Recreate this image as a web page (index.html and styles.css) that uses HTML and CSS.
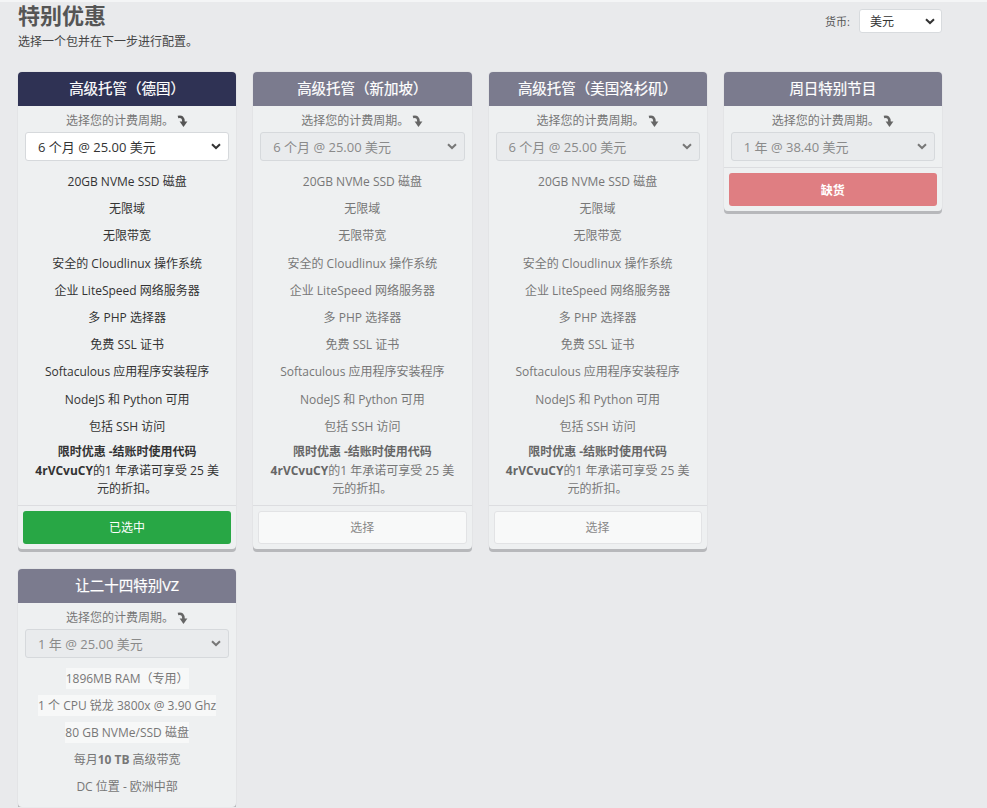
FILE: index.html
```html
<!DOCTYPE html>
<html lang="zh">
<head>
<meta charset="utf-8">
<title>特别优惠</title>
<link rel="stylesheet" href="styles.css">
</head>
<body>
<div class="page">
  <div class="top">
    <div class="intro">
      <h1 class="title">特别优惠</h1>
      <p class="subtitle">选择一个包并在下一步进行配置。</p>
    </div>
    <div class="currency">
      <span class="currency-label">货币:</span>
      <div class="currency-select">美元<svg class="chev" viewBox="0 0 10 7" width="10" height="7"><path d="M1 1.2 L5 5 L9 1.2" fill="none" stroke="#333" stroke-width="2"/></svg></div>
    </div>
  </div>

  <div class="grid">
    <div class="card active">
      <div class="card-head">高级托管（德国）</div>
      <div class="card-body">
        <div class="cycle">选择您的计费周期。<svg class="arrow" viewBox="0 0 11 14" width="11" height="14"><path d="M1 3 Q6.5 1.5 6.5 8" fill="none" stroke="#555" stroke-width="2.6"/><polygon points="2.6,7.5 10.4,7.5 6.5,13" fill="#555"/></svg></div>
        <div class="select">6 个月 @ 25.00 美元<svg class="chev" viewBox="0 0 10 7" width="10" height="7"><path d="M1 1.2 L5 5 L9 1.2" fill="none" stroke="#333" stroke-width="2"/></svg></div>
        <ul class="features">
          <li>20GB NVMe SSD 磁盘</li>
          <li>无限域</li>
          <li>无限带宽</li>
          <li>安全的 Cloudlinux 操作系统</li>
          <li>企业 LiteSpeed 网络服务器</li>
          <li>多 PHP 选择器</li>
          <li>免费 SSL 证书</li>
          <li>Softaculous 应用程序安装程序</li>
          <li>NodeJS 和 Python 可用</li>
          <li>包括 SSH 访问</li>
        </ul>
        <p class="promo"><b>限时优惠 -结账时使用代码 4rVCvuCY</b>的1 年承诺可享受 25 美元的折扣。</p>
      </div>
      <div class="card-foot"><button class="btn btn-selected">已选中</button></div>
    </div>

    <div class="card muted">
      <div class="card-head">高级托管（新加坡）</div>
      <div class="card-body">
        <div class="cycle">选择您的计费周期。<svg class="arrow" viewBox="0 0 11 14" width="11" height="14"><path d="M1 3 Q6.5 1.5 6.5 8" fill="none" stroke="#666" stroke-width="2.6"/><polygon points="2.6,7.5 10.4,7.5 6.5,13" fill="#666"/></svg></div>
        <div class="select">6 个月 @ 25.00 美元<svg class="chev" viewBox="0 0 10 7" width="10" height="7"><path d="M1 1.2 L5 5 L9 1.2" fill="none" stroke="#777" stroke-width="2"/></svg></div>
        <ul class="features">
          <li>20GB NVMe SSD 磁盘</li>
          <li>无限域</li>
          <li>无限带宽</li>
          <li>安全的 Cloudlinux 操作系统</li>
          <li>企业 LiteSpeed 网络服务器</li>
          <li>多 PHP 选择器</li>
          <li>免费 SSL 证书</li>
          <li>Softaculous 应用程序安装程序</li>
          <li>NodeJS 和 Python 可用</li>
          <li>包括 SSH 访问</li>
        </ul>
        <p class="promo"><b>限时优惠 -结账时使用代码 4rVCvuCY</b>的1 年承诺可享受 25 美元的折扣。</p>
      </div>
      <div class="card-foot"><button class="btn btn-choose">选择</button></div>
    </div>

    <div class="card muted">
      <div class="card-head">高级托管（美国洛杉矶）</div>
      <div class="card-body">
        <div class="cycle">选择您的计费周期。<svg class="arrow" viewBox="0 0 11 14" width="11" height="14"><path d="M1 3 Q6.5 1.5 6.5 8" fill="none" stroke="#666" stroke-width="2.6"/><polygon points="2.6,7.5 10.4,7.5 6.5,13" fill="#666"/></svg></div>
        <div class="select">6 个月 @ 25.00 美元<svg class="chev" viewBox="0 0 10 7" width="10" height="7"><path d="M1 1.2 L5 5 L9 1.2" fill="none" stroke="#777" stroke-width="2"/></svg></div>
        <ul class="features">
          <li>20GB NVMe SSD 磁盘</li>
          <li>无限域</li>
          <li>无限带宽</li>
          <li>安全的 Cloudlinux 操作系统</li>
          <li>企业 LiteSpeed 网络服务器</li>
          <li>多 PHP 选择器</li>
          <li>免费 SSL 证书</li>
          <li>Softaculous 应用程序安装程序</li>
          <li>NodeJS 和 Python 可用</li>
          <li>包括 SSH 访问</li>
        </ul>
        <p class="promo"><b>限时优惠 -结账时使用代码 4rVCvuCY</b>的1 年承诺可享受 25 美元的折扣。</p>
      </div>
      <div class="card-foot"><button class="btn btn-choose">选择</button></div>
    </div>

    <div class="card muted">
      <div class="card-head">周日特别节目</div>
      <div class="card-body">
        <div class="cycle">选择您的计费周期。<svg class="arrow" viewBox="0 0 11 14" width="11" height="14"><path d="M1 3 Q6.5 1.5 6.5 8" fill="none" stroke="#666" stroke-width="2.6"/><polygon points="2.6,7.5 10.4,7.5 6.5,13" fill="#666"/></svg></div>
        <div class="select">1 年 @ 38.40 美元<svg class="chev" viewBox="0 0 10 7" width="10" height="7"><path d="M1 1.2 L5 5 L9 1.2" fill="none" stroke="#777" stroke-width="2"/></svg></div>
      </div>
      <div class="card-foot"><button class="btn btn-soldout">缺货</button></div>
    </div>

    <div class="card muted">
      <div class="card-head">让二十四特别VZ</div>
      <div class="card-body">
        <div class="cycle">选择您的计费周期。<svg class="arrow" viewBox="0 0 11 14" width="11" height="14"><path d="M1 3 Q6.5 1.5 6.5 8" fill="none" stroke="#666" stroke-width="2.6"/><polygon points="2.6,7.5 10.4,7.5 6.5,13" fill="#666"/></svg></div>
        <div class="select">1 年 @ 25.00 美元<svg class="chev" viewBox="0 0 10 7" width="10" height="7"><path d="M1 1.2 L5 5 L9 1.2" fill="none" stroke="#777" stroke-width="2"/></svg></div>
        <ul class="features">
          <li><span class="hl">1896MB RAM（专用）</span></li>
          <li><span class="hl">1 个 CPU 锐龙 3800x @ 3.90 Ghz</span></li>
          <li><span class="hl">80 GB NVMe/SSD 磁盘</span></li>
          <li>每月<b>10 TB</b> 高级带宽</li>
          <li>DC 位置 - 欧洲中部</li>
        </ul>
      </div>
    </div>
  </div>
</div>
</body>
</html>
```
FILE: styles.css
```css
* { box-sizing: border-box; }
html, body {
  margin: 0;
  padding: 0;
  background: #e9eaec;
}
body {
  font-family: "Open Sans", "Noto Sans CJK SC", sans-serif;
  color: #333;
  border-top: 2px solid #f4f5f6;
}
.page {
  width: 924px;
  margin-left: 18px;
}
.top {
  display: flex;
  justify-content: space-between;
  align-items: flex-start;
}
.title {
  margin: 0;
  font-size: 22px;
  line-height: 26px;
  font-weight: 700;
  color: #555;
}
.subtitle {
  margin: 6px 0 0;
  font-size: 12px;
  line-height: 16px;
  color: #444;
}
.currency {
  display: flex;
  align-items: center;
  gap: 9px;
  margin-top: 7px;
}
.currency-label {
  font-size: 11px;
  color: #555;
}
.currency-select {
  width: 83px;
  height: 24px;
  background: #fff;
  border: 1px solid #d8dbde;
  border-radius: 3px;
  font-size: 12px;
  color: #333;
  display: flex;
  align-items: center;
  justify-content: space-between;
  padding: 0 6px 0 10px;
}
.grid {
  margin-top: 22px;
  display: grid;
  grid-template-columns: repeat(4, 1fr);
  column-gap: 17px;
  row-gap: 20px;
  align-items: start;
}
.card {
  background: #eef0f1;
  border-radius: 4px;
  box-shadow: 0 3px 0 #b7b8bb, 0 0 0 1px #e3e4e6;
}
.card-head {
  height: 34px;
  line-height: 34px;
  text-align: center;
  font-size: 14.5px;
  color: #fff;
  border-radius: 4px 4px 0 0;
  background: #7b7b8e;
  -webkit-text-stroke: 0.2px #fff;
}
.active .card-head {
  background: #2f3254;
}
.card-body {
  padding: 7px 7px 6px;
  text-align: center;
}
.cycle {
  font-size: 12px;
  line-height: 16px;
  color: #777;
  display: flex;
  justify-content: center;
  align-items: center;
  gap: 3px;
}
.arrow { display: block; }
.select {
  margin-top: 3px;
  height: 29px;
  border: 1px solid #d6d9dc;
  border-radius: 3px;
  background: #fff;
  font-size: 13px;
  color: #333;
  display: flex;
  align-items: center;
  justify-content: space-between;
  padding: 0 7px 0 12px;
  text-align: left;
}
.muted .select {
  background: #e9ebed;
  color: #8a8a8a;
}
.features {
  list-style: none;
  margin: 7px 0 0;
  padding: 0;
}
.features li {
  font-size: 12px;
  line-height: 27.2px;
  color: #333;
}
.muted .features li {
  color: #777;
}
.hl {
  background: #f7f8f8;
  padding: 2px 0;
}
.promo {
  margin: 3px 7px 0;
  font-size: 12px;
  line-height: 18.5px;
  color: #333;
}
.muted .promo { color: #777; }
.muted .promo b { color: #666; }
.card-foot {
  border-top: 1px solid #dcdde0;
  padding: 5px;
}
.btn {
  display: block;
  width: 100%;
  height: 33px;
  border: 0;
  border-radius: 3px;
  font-family: inherit;
  font-size: 12px;
  cursor: pointer;
}
.btn-selected {
  background: #28a745;
  color: #fff;
}
.btn-choose {
  background: #f8f9f9;
  color: #888;
  border: 1px solid #e2e3e5;
}
.btn-soldout {
  background: #df7e82;
  color: #fff;
  font-weight: 700;
}
```
